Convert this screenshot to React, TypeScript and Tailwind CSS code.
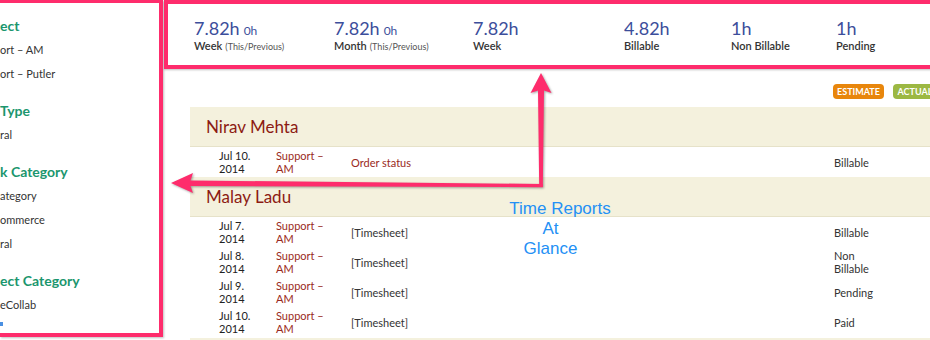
import React from 'react';

const stats = [
  { value: '7.82h', prev: '0h', label: 'Week', note: '(This/Previous)', w: 'w-[140px]' },
  { value: '7.82h', prev: '0h', label: 'Month', note: '(This/Previous)', w: 'w-[139px]' },
  { value: '7.82h', label: 'Week', w: 'w-[151px]' },
  { value: '4.82h', label: 'Billable', w: 'w-[107px]' },
  { value: '1h', label: 'Non Billable', w: 'w-[105px]' },
  { value: '1h', label: 'Pending', w: 'w-[100px]' },
];

const filters = [
  { title: 'ect', items: ['ort – AM', 'ort – Putler'] },
  { title: 'Type', items: ['ral'] },
  { title: 'k Category', items: ['ategory', 'ommerce', 'ral'] },
  { title: 'ect Category', items: ['eCollab'] },
];

const groups = [
  {
    name: 'Nirav Mehta',
    rows: [{ date: 'Jul 10. 2014', desc: 'Order status', red: true, status: 'Billable' }],
  },
  {
    name: 'Malay Ladu',
    rows: [
      { date: 'Jul 7. 2014', desc: '[Timesheet]', status: 'Billable' },
      { date: 'Jul 8. 2014', desc: '[Timesheet]', status: 'Non Billable' },
      { date: 'Jul 9. 2014', desc: '[Timesheet]', status: 'Pending' },
      { date: 'Jul 10. 2014', desc: '[Timesheet]', status: 'Paid' },
    ],
  },
];

function Sidebar() {
  return (
    <aside className="w-[163px] h-[337px] shrink-0 border-t-[3px] border-r-4 border-b-4 border-[#fe2c6c] shadow-[1px_1px_2px_rgba(0,0,0,0.25)] pt-[11px] overflow-hidden">
      {filters.map((f) => (
        <div key={f.title} className="mb-[13px] whitespace-nowrap">
          <div className="h-[24px] leading-[24px] text-[14px] font-bold text-[#1b966e]">{f.title}</div>
          {f.items.map((it, i) => (
            <div key={i} className="h-[24px] leading-[24px] text-[11px] text-[#333]">
              {it}
            </div>
          ))}
        </div>
      ))}
      <div className="-mt-[8px] w-[3px] h-[4px] bg-[#4a90e2]" />
    </aside>
  );
}

function StatsBar() {
  return (
    <div className="w-[800px] h-[69px] border-y-4 border-l-4 border-[#fe2c6c] shadow-[0_1px_2px_rgba(0,0,0,0.25)] flex pl-[26px] pt-[13px]">
      {stats.map((s, i) => (
        <div key={i} className={`${s.w} shrink-0`}>
          <div className="h-[22px] leading-[22px] text-[18px] text-[#3c4e9b] whitespace-nowrap">
            {s.value}
            {s.prev && <span className="text-[12px] ml-[4px]">{s.prev}</span>}
          </div>
          <div className="leading-[14px] text-[11px] font-semibold text-[#333] whitespace-nowrap">
            {s.label}
            {s.note && <span className="text-[9px] font-normal text-[#555] ml-[3px]">{s.note}</span>}
          </div>
        </div>
      ))}
    </div>
  );
}

function Report() {
  return (
    <div className="w-[790px]">
      <div className="flex justify-end gap-[9px] pr-[17px] pt-[15px]">
        <span className="w-[51px] h-[15px] rounded-[4px] bg-[#e8860c] text-white text-[9px] font-bold leading-[15px] text-center">
          ESTIMATE
        </span>
        <span className="w-[44px] h-[15px] rounded-[4px] bg-[#9cb843] text-white text-[9px] font-bold leading-[15px] text-center">
          ACTUAL
        </span>
      </div>
      <div className="ml-[26px] mt-[8px]">
        {groups.map((g) => (
          <div key={g.name}>
            <div className="h-[40px] bg-[#f4f1dd] border-b border-[#e6e2c9] flex items-center pl-4 text-[17px] text-[#8c1b13]">
              {g.name}
            </div>
            {g.rows.map((r, i) => (
              <div key={i} className="h-[30px] grid grid-cols-[29px_57px_75px_483px_60px] items-center text-[11px] leading-[13px]">
                <div />
                <div className="w-[45px] text-[#222]">{r.date}</div>
                <div className="w-[56px] text-[#9a2a22]">Support – AM</div>
                <div className={r.red ? 'text-[#9a2a22]' : 'text-[#333]'}>{r.desc}</div>
                <div className="w-[45px] text-[#333]">{r.status}</div>
              </div>
            ))}
          </div>
        ))}
        <div className="h-[40px] bg-[#f4f1dd] mt-px" />
      </div>
    </div>
  );
}

function Annotation() {
  return (
    <>
      <svg
        className="absolute left-0 top-0 pointer-events-none"
        width="930"
        height="340"
        viewBox="0 0 930 340"
        style={{ filter: 'drop-shadow(1px 1px 1px rgba(0,0,0,0.35))' }}
      >
        <path
          d="M541 73 L551.5 93 L544 90.5 L542.8 187 L539.2 187 L538 90.5 L530.5 93 Z"
          fill="#fe2c6c"
        />
        <path
          d="M171 183 L193 173 L190.5 180.5 L542.8 184 L542.8 187.2 L190.5 186 L193 193 Z"
          fill="#fe2c6c"
        />
      </svg>
      <div className="absolute left-[500px] top-[199px] w-[120px] text-center text-[17px] leading-[20px] text-[#2390f5] font-['Liberation_Sans',Arial,sans-serif] pointer-events-none">
        <div>Time Reports</div>
        <div className="pr-[19px]">At</div>
        <div className="pr-[19px]">Glance</div>
      </div>
    </>
  );
}

export default function App() {
  return (
    <div className="relative w-[930px] h-[340px] overflow-hidden bg-white flex font-['Lato','Open_Sans',sans-serif]">
      <Sidebar />
      <div className="flex-1 min-w-0 overflow-hidden pl-px">
        <StatsBar />
        <Report />
      </div>
      <Annotation />
    </div>
  );
}
